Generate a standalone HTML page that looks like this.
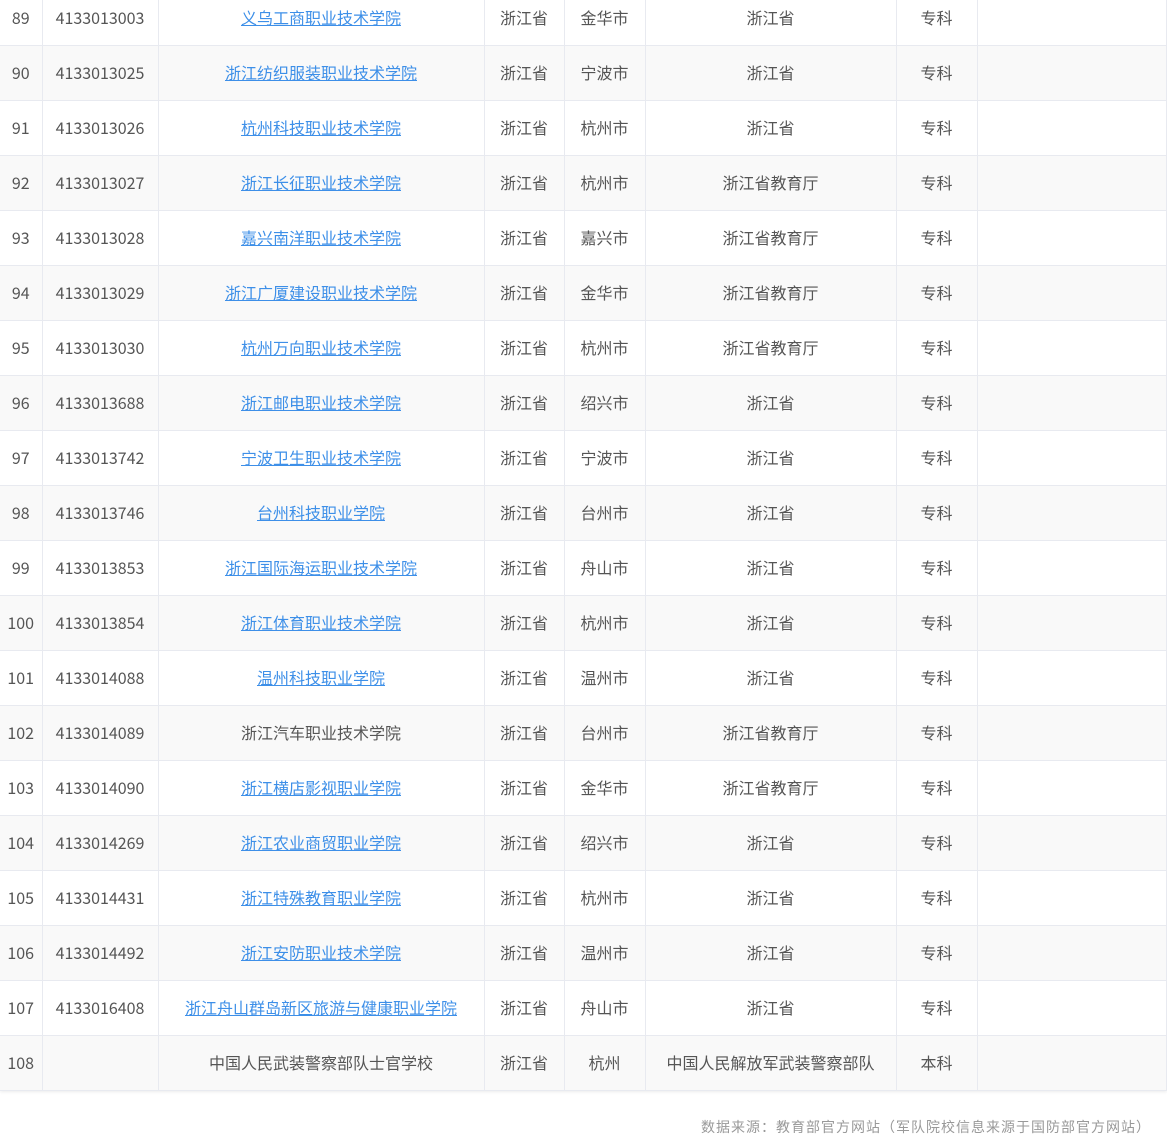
<!DOCTYPE html>
<html><head><meta charset="utf-8"><style>
body{margin:0;width:1167px;height:1146px;overflow:hidden;background:#fff;font-family:"Noto Sans CJK SC","Liberation Sans",sans-serif;position:relative}
table{position:absolute;left:0;top:-9px;border-collapse:collapse;width:1167px;table-layout:fixed;box-shadow:0 1px 3px rgba(0,0,0,.08)}
td{height:52px;border:1px solid #e8eaf0;border-top:none;text-align:center;font-size:16px;line-height:22px;color:#555;padding:0 0 2px;white-space:nowrap;vertical-align:middle}
td:first-child{border-left:none}
tr:nth-child(even) td{background:#f9f9f9}
a{color:#3d8fe8;text-decoration:underline}
.foot{position:absolute;right:16px;top:1116px;font-size:14px;color:#999;line-height:22px;letter-spacing:1px}
</style></head><body>
<table>
<colgroup><col style="width:42px"><col style="width:116px"><col style="width:326px"><col style="width:80px"><col style="width:81px"><col style="width:251px"><col style="width:81px"><col></colgroup>
<tr><td>89</td><td>4133013003</td><td><a>义乌工商职业技术学院</a></td><td>浙江省</td><td>金华市</td><td>浙江省</td><td>专科</td><td></td></tr>
<tr><td>90</td><td>4133013025</td><td><a>浙江纺织服装职业技术学院</a></td><td>浙江省</td><td>宁波市</td><td>浙江省</td><td>专科</td><td></td></tr>
<tr><td>91</td><td>4133013026</td><td><a>杭州科技职业技术学院</a></td><td>浙江省</td><td>杭州市</td><td>浙江省</td><td>专科</td><td></td></tr>
<tr><td>92</td><td>4133013027</td><td><a>浙江长征职业技术学院</a></td><td>浙江省</td><td>杭州市</td><td>浙江省教育厅</td><td>专科</td><td></td></tr>
<tr><td>93</td><td>4133013028</td><td><a>嘉兴南洋职业技术学院</a></td><td>浙江省</td><td>嘉兴市</td><td>浙江省教育厅</td><td>专科</td><td></td></tr>
<tr><td>94</td><td>4133013029</td><td><a>浙江广厦建设职业技术学院</a></td><td>浙江省</td><td>金华市</td><td>浙江省教育厅</td><td>专科</td><td></td></tr>
<tr><td>95</td><td>4133013030</td><td><a>杭州万向职业技术学院</a></td><td>浙江省</td><td>杭州市</td><td>浙江省教育厅</td><td>专科</td><td></td></tr>
<tr><td>96</td><td>4133013688</td><td><a>浙江邮电职业技术学院</a></td><td>浙江省</td><td>绍兴市</td><td>浙江省</td><td>专科</td><td></td></tr>
<tr><td>97</td><td>4133013742</td><td><a>宁波卫生职业技术学院</a></td><td>浙江省</td><td>宁波市</td><td>浙江省</td><td>专科</td><td></td></tr>
<tr><td>98</td><td>4133013746</td><td><a>台州科技职业学院</a></td><td>浙江省</td><td>台州市</td><td>浙江省</td><td>专科</td><td></td></tr>
<tr><td>99</td><td>4133013853</td><td><a>浙江国际海运职业技术学院</a></td><td>浙江省</td><td>舟山市</td><td>浙江省</td><td>专科</td><td></td></tr>
<tr><td>100</td><td>4133013854</td><td><a>浙江体育职业技术学院</a></td><td>浙江省</td><td>杭州市</td><td>浙江省</td><td>专科</td><td></td></tr>
<tr><td>101</td><td>4133014088</td><td><a>温州科技职业学院</a></td><td>浙江省</td><td>温州市</td><td>浙江省</td><td>专科</td><td></td></tr>
<tr><td>102</td><td>4133014089</td><td>浙江汽车职业技术学院</td><td>浙江省</td><td>台州市</td><td>浙江省教育厅</td><td>专科</td><td></td></tr>
<tr><td>103</td><td>4133014090</td><td><a>浙江横店影视职业学院</a></td><td>浙江省</td><td>金华市</td><td>浙江省教育厅</td><td>专科</td><td></td></tr>
<tr><td>104</td><td>4133014269</td><td><a>浙江农业商贸职业学院</a></td><td>浙江省</td><td>绍兴市</td><td>浙江省</td><td>专科</td><td></td></tr>
<tr><td>105</td><td>4133014431</td><td><a>浙江特殊教育职业学院</a></td><td>浙江省</td><td>杭州市</td><td>浙江省</td><td>专科</td><td></td></tr>
<tr><td>106</td><td>4133014492</td><td><a>浙江安防职业技术学院</a></td><td>浙江省</td><td>温州市</td><td>浙江省</td><td>专科</td><td></td></tr>
<tr><td>107</td><td>4133016408</td><td><a>浙江舟山群岛新区旅游与健康职业学院</a></td><td>浙江省</td><td>舟山市</td><td>浙江省</td><td>专科</td><td></td></tr>
<tr><td>108</td><td></td><td>中国人民武装警察部队士官学校</td><td>浙江省</td><td>杭州</td><td>中国人民解放军武装警察部队</td><td>本科</td><td></td></tr>
</table>
<div class="foot">数据来源：教育部官方网站（军队院校信息来源于国防部官方网站）</div>
</body></html>
